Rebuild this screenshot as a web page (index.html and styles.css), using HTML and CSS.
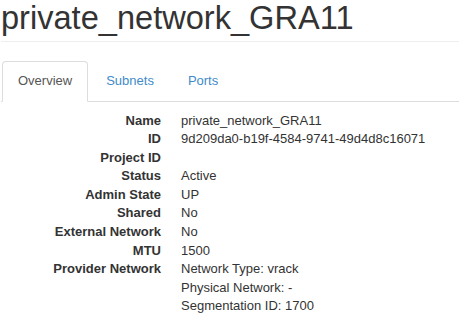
FILE: index.html
```html
<!DOCTYPE html>
<html>
<head>
    <title>private_network_GRA11</title>
    <link rel="stylesheet" href="styles.css">
</head>
<body>
    <div class="page">
        <div class="page-header">
            <h1>private_network_GRA11</h1>
        </div>

        <ul class="nav-tabs">
            <li class="active"><a href="#">Overview</a></li>
            <li><a href="#">Subnets</a></li>
            <li><a href="#">Ports</a></li>
        </ul>

        <div class="tab-content">
            <dl class="dl-horizontal">
                <dt>Name</dt>
                <dd>private_network_GRA11</dd>
                <dt>ID</dt>
                <dd>9d209da0-b19f-4584-9741-49d4d8c16071</dd>
                <dt>Project ID</dt>
                <dd></dd>
                <dt>Status</dt>
                <dd>Active</dd>
                <dt>Admin State</dt>
                <dd>UP</dd>
                <dt>Shared</dt>
                <dd>No</dd>
                <dt>External Network</dt>
                <dd>No</dd>
                <dt>MTU</dt>
                <dd>1500</dd>
                <dt>Provider Network</dt>
                <dd>
                    Network Type: vrack<br>
                    Physical Network: -<br>
                    Segmentation ID: 1700
                </dd>
            </dl>
        </div>
    </div>
</body>
</html>
```

FILE: styles.css
```css
:root {
    --text: #333;
    --link: #428bca;
    --line: #ddd;
}

body {
    font-family: 'Liberation Sans', Arial, sans-serif;
    font-size: 13px;
    line-height: 1.42857;
    color: var(--text);
    background-color: white;
    margin: 0;
}

.page {
    padding: 0 1px;
}

.page-header {
    padding-bottom: 6px;
    border-bottom: 1px solid #eee;
    margin-bottom: 19px;
}

h1 {
    margin: 0;
    font-size: 32.6px;
    font-weight: 400;
    line-height: 35px;
    color: #333;
}

.nav-tabs {
    list-style: none;
    margin: 0;
    padding: 0 0 0 1px;
    display: flex;
    border-bottom: 1px solid var(--line);
}

.nav-tabs li {
    margin-right: 2px;
    margin-bottom: -1px;
}

.nav-tabs a {
    display: block;
    padding: 10px 15px;
    line-height: 18.6px;
    border: 1px solid transparent;
    border-radius: 4px 4px 0 0;
    color: var(--link);
    text-decoration: none;
}

.nav-tabs .active a {
    color: #555;
    background-color: white;
    border-color: var(--line) var(--line) transparent;
}

.tab-content {
    padding-top: 10px;
}

.dl-horizontal {
    margin: 0;
    display: grid;
    grid-template-columns: 160px 1fr;
    column-gap: 20px;
}

.dl-horizontal dt {
    font-weight: 700;
    text-align: right;
    white-space: nowrap;
}

.dl-horizontal dd {
    margin: 0;
    min-height: 18.57px;
}
```
